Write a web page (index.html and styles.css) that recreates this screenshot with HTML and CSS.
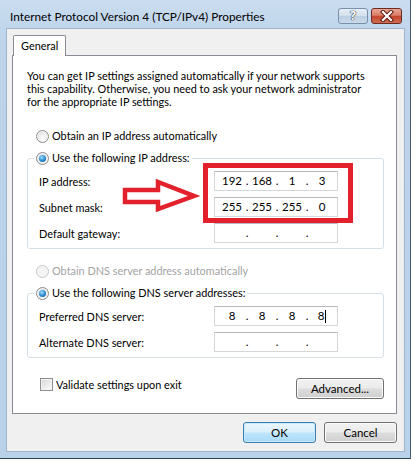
FILE: index.html
```html
<!DOCTYPE html>
<html>
<head>
<meta charset="utf-8">
<link rel="stylesheet" href="styles.css">
</head>
<body>
<div class="window">
  <div class="titlebar">
    <span class="title">Internet Protocol Version 4 (TCP/IPv4) Properties</span>
    <div class="caption-buttons">
      <span class="cap-btn cap-help">?</span>
      <span class="cap-btn cap-close">
        <svg width="16" height="12" viewBox="0 0 16 12">
          <path d="M4 2 L12 10 M12 2 L4 10" stroke="#5a1a10" stroke-width="4.2" stroke-linecap="square"/>
          <path d="M4 2 L12 10 M12 2 L4 10" stroke="#ffffff" stroke-width="2.2" stroke-linecap="square"/>
        </svg>
      </span>
    </div>
  </div>
  <div class="client">
    <div class="tabstrip"><span class="tab">General</span></div>
    <div class="panel">
      <p class="intro">You can get IP settings assigned automatically if your network supports<br>this capability. Otherwise, you need to ask your network administrator<br>for the appropriate IP settings.</p>

      <div class="option option-first"><span class="radio"></span>Obtain an IP address automatically</div>
      <fieldset class="group">
        <legend class="option"><span class="radio checked"></span>Use the following IP address:</legend>
        <div class="rows">
          <div class="field-row">
            <span class="field-label">IP address:</span>
            <span class="ipbox"><span class="oct">192</span><span class="dot">.</span><span class="oct">168</span><span class="dot">.</span><span class="oct">1</span><span class="dot">.</span><span class="oct">3</span></span>
          </div>
          <div class="field-row">
            <span class="field-label">Subnet mask:</span>
            <span class="ipbox"><span class="oct">255</span><span class="dot">.</span><span class="oct">255</span><span class="dot">.</span><span class="oct">255</span><span class="dot">.</span><span class="oct">0</span></span>
          </div>
          <div class="field-row">
            <span class="field-label">Default gateway:</span>
            <span class="ipbox"><span class="oct"></span><span class="dot">.</span><span class="oct"></span><span class="dot">.</span><span class="oct"></span><span class="dot">.</span><span class="oct"></span></span>
          </div>
        </div>
      </fieldset>

      <div class="option option-dns disabled"><span class="radio"></span>Obtain DNS server address automatically</div>
      <fieldset class="group">
        <legend class="option"><span class="radio checked"></span>Use the following DNS server addresses:</legend>
        <div class="rows">
          <div class="field-row">
            <span class="field-label">Preferred DNS server:</span>
            <span class="ipbox"><span class="oct">8</span><span class="dot">.</span><span class="oct">8</span><span class="dot">.</span><span class="oct">8</span><span class="dot">.</span><span class="oct">8<span class="caret"></span></span></span>
          </div>
          <div class="field-row">
            <span class="field-label">Alternate DNS server:</span>
            <span class="ipbox"><span class="oct"></span><span class="dot">.</span><span class="oct"></span><span class="dot">.</span><span class="oct"></span><span class="dot">.</span><span class="oct"></span></span>
          </div>
        </div>
      </fieldset>

      <div class="bottom-row">
        <div class="check-option"><span class="checkbox"></span>Validate settings upon exit</div>
        <button class="btn btn-advanced">Advanced...</button>
      </div>
    </div>
    <div class="dialog-buttons">
      <button class="btn btn-default">OK</button>
      <button class="btn">Cancel</button>
    </div>
  </div>
  <svg class="annotation" width="411" height="459" viewBox="0 0 411 459">
    <rect x="205.5" y="165.5" width="145" height="55" fill="none" stroke="#e3212d" stroke-width="5"/>
    <path d="M125 190 H158 V182 L194 196 L158 209 V202 H125 Z" fill="#ffffff" stroke="#e3212d" stroke-width="4.5" stroke-linejoin="miter"/>
  </svg>
</div>
</body>
</html>
```

FILE: styles.css
```css
* { box-sizing: border-box; }
html, body { margin: 0; background: #ffffff; }
body {
  font-family: Lato, "Open Sans", sans-serif;
  font-size: 10.9px;
  color: #000000;
}

.window {
  position: relative;
  width: 411px;
  height: 459px;
  padding: 0 5px 6px 6px;
  border-right: 1px solid #4a5a6c;
  border-bottom: 1px solid #33414f;
  background: linear-gradient(180deg, #cadcef 0, #bdd4eb 40px, #b9d1e9 100%);
  display: flex;
  flex-direction: column;
}

.titlebar {
  height: 28px;
  flex: none;
  display: flex;
  justify-content: space-between;
  align-items: flex-start;
}
.title {
  margin: 9px 0 0 4px;
  font-size: 11.8px;
  line-height: 16px;
  color: #000;
}
.caption-buttons {
  display: flex;
  gap: 3px;
  margin: 8px 3px 0 0;
}
.cap-btn {
  width: 30px;
  height: 16px;
  border: 1px solid #7890ac;
  border-radius: 3px;
  display: flex;
  align-items: center;
  justify-content: center;
}
.cap-help {
  background: linear-gradient(180deg, #e6eef7 0, #d3dfec 50%, #bccee2 51%, #cbdaea 100%);
  color: #ffffff;
  font-family: "Open Sans", sans-serif;
  font-weight: bold;
  font-size: 12px;
  line-height: 14px;
  text-shadow: 0 0 1px #2d3b4c, 0 0 1px #2d3b4c, 0 0 1px #2d3b4c;
}
.cap-close {
  width: 31px;
  border-color: #6b2b20;
  background: linear-gradient(180deg, #eaa698 0, #db7d66 45%, #c4452b 52%, #d06c54 100%);
}

.client {
  flex: 1;
  background: #f0f0f0;
  border: 1px solid #9fb4ca;
  padding: 6px 7px 0 5px;
  display: flex;
  flex-direction: column;
}

.tabstrip {
  display: flex;
  position: relative;
  z-index: 1;
  margin-bottom: -1px;
}
.tab {
  margin-left: 1px;
  height: 21px;
  padding: 0 7px 0 7px;
  border: 1px solid #898c95;
  border-bottom: none;
  border-radius: 2px 2px 0 0;
  background: #ffffff;
  line-height: 19px;
}

.panel {
  height: 359px;
  flex: none;
  border: 1px solid #898c95;
  background: #ffffff;
  padding: 13px 12px 0 14px;
  display: flex;
  flex-direction: column;
}

.intro {
  margin: 0;
  line-height: 13px;
  white-space: nowrap;
}

.option {
  display: flex;
  align-items: center;
  height: 16px;
  line-height: 16px;
  white-space: nowrap;
}
.option-first { margin-top: 20px; padding-left: 9px; }
.option-dns { margin-top: 14px; padding-left: 9px; }
.disabled { color: #a3a3a3; }

.radio {
  position: relative;
  flex: none;
  width: 13px;
  height: 13px;
  margin-right: 3px;
  border-radius: 50%;
  border: 1px solid #8b8c8c;
  background: radial-gradient(circle at 60% 65%, #ffffff 0, #e9e9e9 55%, #cfcfcf 100%);
  box-shadow: inset 0 0 0 1px #f6f6f6;
}
.radio.checked::after {
  content: "";
  position: absolute;
  left: 2px;
  top: 2px;
  width: 7px;
  height: 7px;
  border-radius: 50%;
  background: radial-gradient(circle at 40% 35%, #a6e0ff 0, #2d8fd6 50%, #0c4c88 100%);
}
.disabled .radio {
  border-color: #c6c6c6;
  background: #f3f3f3;
}

.group {
  margin: 6px 0 0 0;
  padding: 0;
  border: 1px solid #d5dfe5;
  border-radius: 3px;
  min-width: 0;
}
.group legend {
  margin-left: 6px;
  padding: 0 2px;
}

.rows {
  display: flex;
  flex-direction: column;
  gap: 6px;
  padding: 5px 0 5px 11px;
}
.field-row {
  display: grid;
  grid-template-columns: 175px 124px;
  align-items: center;
  height: 20px;
}
.field-label { white-space: nowrap; }

.ipbox {
  display: flex;
  height: 20px;
  padding-left: 4px;
  border: 1px solid #d3d6db;
  border-top-color: #b5b8be;
  background: #ffffff;
  line-height: 18px;
  font-size: 11.5px;
}
.oct {
  width: 26px;
  text-align: center;
  display: flex;
  justify-content: center;
  align-items: center;
}
.dot {
  width: 4px;
  text-align: center;
}
.caret {
  display: inline-block;
  width: 1px;
  height: 13px;
  margin-left: 1px;
  background: #000;
}

.bottom-row {
  margin-top: 20px;
  display: flex;
  justify-content: space-between;
  align-items: flex-start;
}
.check-option {
  display: flex;
  align-items: center;
  padding-left: 13px;
  height: 12px;
  margin-top: 0;
  white-space: nowrap;
}
.checkbox {
  flex: none;
  width: 13px;
  height: 13px;
  margin-right: 3px;
  border: 1px solid #8e8f8f;
  background: linear-gradient(135deg, #d6d6d6 0, #f2f2f2 70%, #ffffff 100%);
  box-shadow: inset 0 0 0 1px #f4f4f4;
}

.btn {
  font-family: inherit;
  font-size: 11.5px;
  color: #000;
  height: 21px;
  padding: 0;
  border: 1px solid #707070;
  border-radius: 3px;
  background: linear-gradient(180deg, #f2f2f2 0, #ebebeb 48%, #dddddd 52%, #cfcfcf 100%);
  box-shadow: inset 0 0 0 1px #fbfbfb;
  line-height: 19px;
}
.btn-advanced { width: 88px; }

.dialog-buttons {
  margin-top: 8px;
  display: flex;
  justify-content: flex-end;
  gap: 8px;
}
.dialog-buttons .btn { width: 73px; }
.btn-default {
  border-color: #3c7fb1;
  background: linear-gradient(180deg, #eaf6fd 0, #d9f0fc 48%, #bee6fd 52%, #a7d9f5 100%);
  box-shadow: inset 0 0 0 1px #c9eafc;
}

.annotation {
  position: absolute;
  left: 0;
  top: 0;
  pointer-events: none;
}
```
